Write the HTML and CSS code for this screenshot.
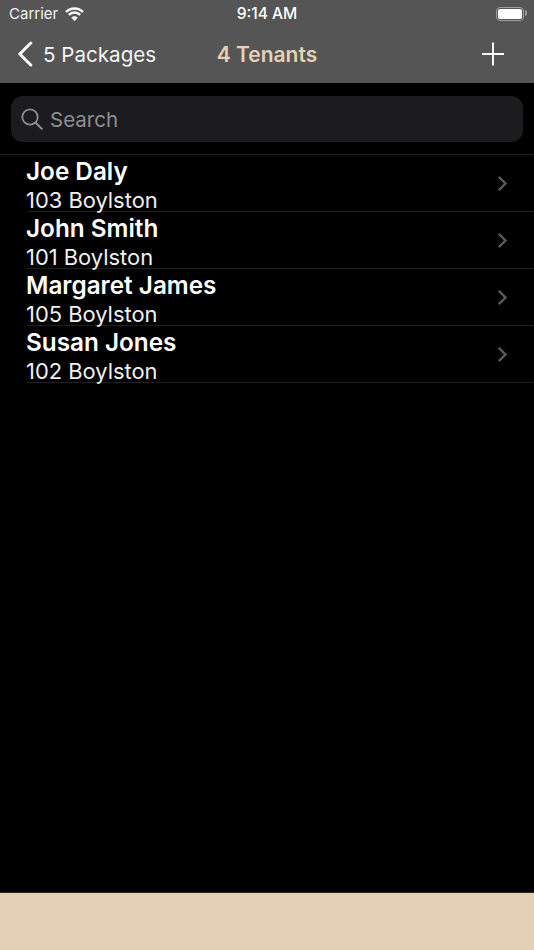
FILE: index.html
```html
<!DOCTYPE html>
<html lang="en">
<head>
<meta charset="utf-8">
<title>4 Tenants</title>
<link rel="stylesheet" href="styles.css">
</head>
<body>
<div class="screen">
  <header class="top">
    <div class="status">
      <div class="status-left">
        <span class="carrier">Carrier</span>
        <svg class="wifi" width="19" height="14" viewBox="0 0 19 14"><path d="M1.010 5.010A12 12 0 0 1 17.990 5.010M3.840 7.840A8 8 0 0 1 15.160 7.840" fill="none" stroke="#fff" stroke-width="2.400"/><path d="M9.500 14L6.300 10.700A4.500 4.500 0 0 1 12.700 10.700Z" fill="#fff"/></svg>
      </div>
      <span class="time">9:14 AM</span>
      <div class="battery"><span class="battery-fill"></span></div>
    </div>
    <nav class="navbar">
      <div class="back">
        <svg class="chevron-back" width="16" height="26" viewBox="0 0 16 26"><path d="M13.800 2L2.800 13l11 11" fill="none" stroke="#fff" stroke-width="3" stroke-linecap="round" stroke-linejoin="round"/></svg>
        <span>5 Packages</span>
      </div>
      <h1 class="title">4 Tenants</h1>
      <svg class="plus" width="24" height="24" viewBox="0 0 24 24"><path d="M12 .5v23M1 12h22" stroke="#fff" stroke-width="1.900"/></svg>
    </nav>
  </header>
  <div class="search-wrap">
    <div class="search">
      <svg class="search-icon" width="22" height="22" viewBox="0 0 22 22"><circle cx="9" cy="9" r="7.700" fill="none" stroke="#8e8e93" stroke-width="1.800"/><path d="M14.700 14.700l6 6" stroke="#8e8e93" stroke-width="2" stroke-linecap="round"/></svg>
      <span>Search</span>
    </div>
  </div>
  <main class="list">
    <div class="row"><div class="row-text"><div class="name">Joe Daly</div><div class="addr">103 Boylston</div></div><svg class="chev" width="11" height="17" viewBox="0 0 11 17"><path d="M1.800 1.800L8.500 8.500l-6.700 6.700" fill="none" stroke="#5a5a5e" stroke-width="2.400"/></svg></div>
    <div class="row"><div class="row-text"><div class="name">John Smith</div><div class="addr">101 Boylston</div></div><svg class="chev" width="11" height="17" viewBox="0 0 11 17"><path d="M1.800 1.800L8.500 8.500l-6.700 6.700" fill="none" stroke="#5a5a5e" stroke-width="2.400"/></svg></div>
    <div class="row"><div class="row-text"><div class="name">Margaret James</div><div class="addr">105 Boylston</div></div><svg class="chev" width="11" height="17" viewBox="0 0 11 17"><path d="M1.800 1.800L8.500 8.500l-6.700 6.700" fill="none" stroke="#5a5a5e" stroke-width="2.400"/></svg></div>
    <div class="row"><div class="row-text"><div class="name">Susan Jones</div><div class="addr">102 Boylston</div></div><svg class="chev" width="11" height="17" viewBox="0 0 11 17"><path d="M1.800 1.800L8.500 8.500l-6.700 6.700" fill="none" stroke="#5a5a5e" stroke-width="2.400"/></svg></div>
  </main>
  <footer class="toolbar"></footer>
</div>
</body>
</html>
```
FILE: styles.css
```css
* { box-sizing: border-box; }
html, body { margin: 0; padding: 0; height: 100%; background: #000; }
body { font-family: Inter, "Liberation Sans", sans-serif; color: #fff; overflow: hidden; }
.screen { width: 534px; height: 950px; display: flex; flex-direction: column; background: #000; }
.top { height: 83px; background: #555; flex: none; }
.status { height: 27px; position: relative; display: flex; align-items: center; justify-content: space-between; padding: 0 10px 0 9px; }
.status-left { display: flex; align-items: center; gap: 7px; }
.carrier { font-size: 15px; color: #f2f2f2; }
.wifi { display: block; }
.time { position: absolute; left: 0; right: 0; text-align: center; font-size: 15.600px; font-weight: 500; }
.battery { width: 28px; height: 14px; border: 1.500px solid #a0a0a0; border-radius: 4px; padding: 1px; position: relative; }
.battery::after { content: ""; position: absolute; right: -4px; top: 2.500px; width: 2px; height: 6px; background: #999; border-radius: 0 2px 2px 0; }
.battery-fill { display: block; height: 100%; background: #fff; border-radius: 2px; }
.navbar { height: 56px; position: relative; display: flex; align-items: center; justify-content: space-between; padding: 0 29px 2px 17px; }
.back { display: flex; align-items: center; gap: 10px; font-size: 20.600px; color: #f4f4f4; }
.chevron-back { display: block; }
.title { position: absolute; left: 0; right: 0; top: 14px; margin: 0; text-align: center; font-size: 21px; line-height: 28px; font-weight: 600; color: #e4d1b5; }
.plus { display: block; }
.search-wrap { padding: 13px 11px 12px; flex: none; border-bottom: 1px solid #1c1c1e; }
.search { height: 46px; background: #1c1c1e; border-radius: 12px; display: flex; align-items: center; gap: 7px; padding: 0 10px; font-size: 20.500px; color: #8e8e93; }
.search-icon { display: block; }
.list { flex: 1; }
.row { height: 57px; margin-left: 27px; display: flex; align-items: center; justify-content: space-between; padding-right: 26px; border-bottom: 1px solid #1f1f21; }
.row-text { display: flex; flex-direction: column; align-self: flex-start; margin-left: -1px; padding-top: 2px; }
.name { font-size: 24.300px; line-height: 29px; font-weight: 600; }
.addr { font-size: 21.900px; line-height: 28px; font-weight: 400; color: #f0f0f0; }
.chev { display: block; }
.toolbar { height: 57px; flex: none; background: #e4d1b5; box-shadow: 0 -1px 0 #2c2c2e; }
```
